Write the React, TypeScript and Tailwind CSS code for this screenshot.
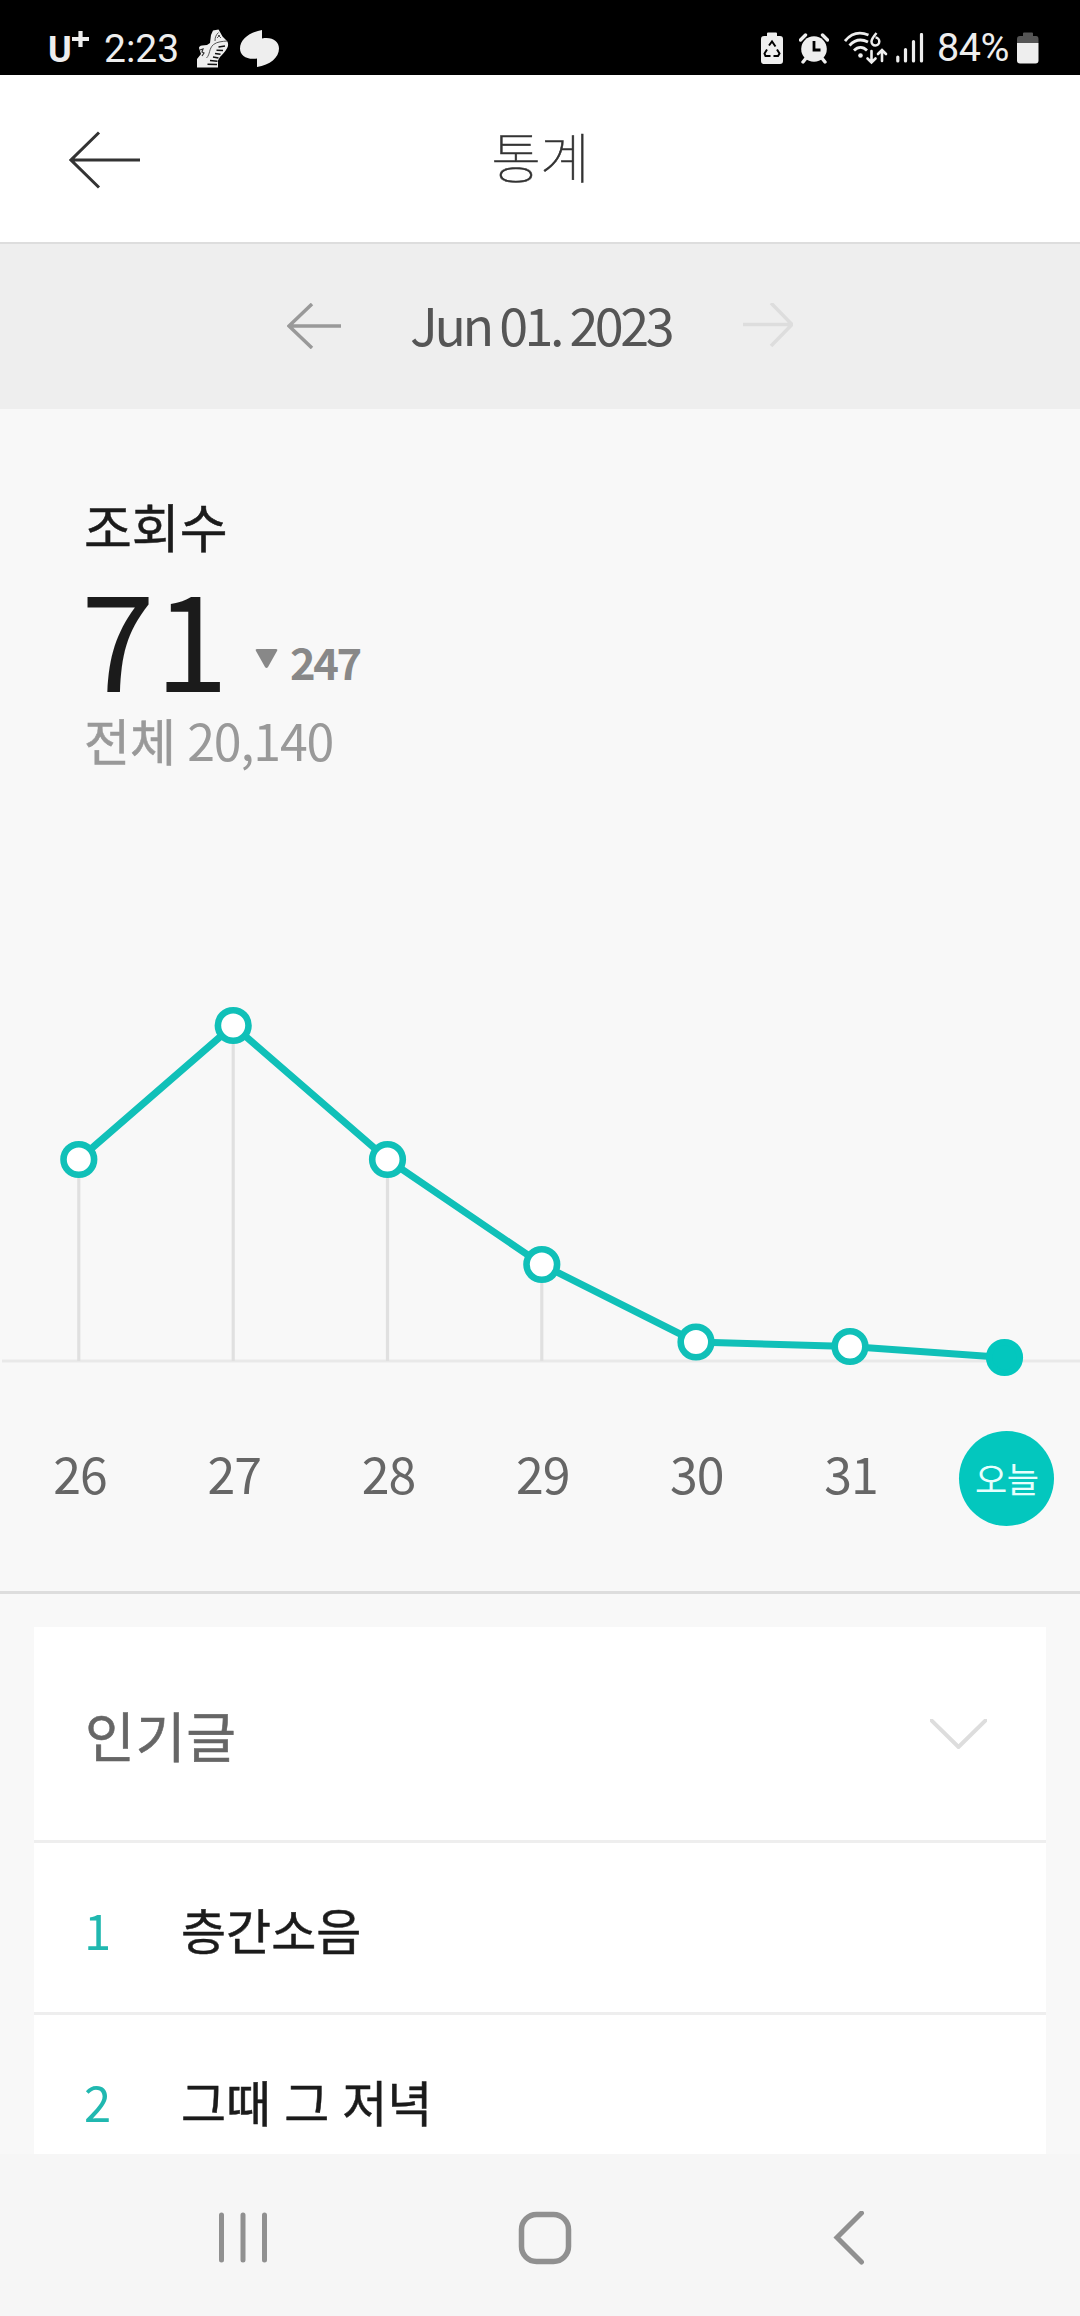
const days = [
  { label: '26', x: 78.8, y: 159.5 },
  { label: '27', x: 233.2, y: 25.5 },
  { label: '28', x: 387.5, y: 159.5 },
  { label: '29', x: 541.8, y: 264.5 },
  { label: '30', x: 696, y: 342 },
  { label: '31', x: 850, y: 346.5 },
  { label: '오늘', x: 1004.5, y: 357.5, today: true },
];

const posts = [
  { rank: 1, title: '층간소음' },
  { rank: 2, title: '그때 그 저녁' },
];

function ShoeIcon() {
  return (
    <svg width="32" height="40" viewBox="0 0 32 40" className="mt-[28.5px] ml-[18px] shrink-0">
      <path
        d="M0 38.500V30l4-5-2-6q0-2 3-2.500l5-.5 3-2 1-8 2-4.500L21.500.500 23 3l2.500 4.500 4 4q2 1.500 1.500 5.500-1 4-8 11l-2 3.500v7z"
        fill="#eeeeee"
      />
      <path d="M9.500 29c4-4 2-9 7-13.500 4-3 9-3 13.500-3.500M18 12c0-4 1-6 3.500-8.500M21 6l3 3M20 9l3-3" stroke="#444" strokeWidth="0.9" fill="none" />
      <path
        d="M21.500 18l6.500-1M19.500 21.200l6.500.3M18 24.500l5.500.8M16 28l5.500 1M13 31.500l7.500.8M10.500 35.200l9.500.3"
        stroke="#111"
        strokeWidth="1.600"
      />
      <path d="M3 21l3-1-1 3 2 1-2 3" stroke="#333" strokeWidth="1.200" fill="none" />
    </svg>
  );
}

function WifiIcon() {
  return (
    <svg width="44" height="34" viewBox="0 0 44 34" fill="none" stroke="#eeeeee" strokeWidth="2.8" className="mt-[31px] ml-[15px] shrink-0">
      <path d="M1 10C8 1.500 17 1 24.500 4" />
      <path d="M5.500 14.500C11 8.500 17 7.500 24 11" />
      <path d="M10 19.500c4-4 9-4 13 0" />
      <circle cx="16.500" cy="24.500" r="2.300" fill="#eeeeee" stroke="none" />
      <path d="M32.500 2c-3 3.500-5 6-5 8.500a3.900 3.900 0 1 0 4-3.900" strokeWidth="2.5" />
      <path d="M27.500 20v11M23.500 27.500l4 4 4-4M38 30V19.500M34 23l4-4 4 4" strokeWidth="2.600" strokeLinecap="round" />
    </svg>
  );
}

function StatusBar() {
  return (
    <div className="flex h-[75px] items-start bg-black pl-[47px] font-[Roboto,sans-serif] text-[#eeeeee]">
      <span className="mt-[31px] ml-px w-[24px] text-[36px] leading-[38px] font-bold">U</span>
      <svg width="17" height="18" viewBox="0 0 17 18" className="mt-[30px] shrink-0">
        <path d="M8.500 1v16M0 9h17" stroke="#eeeeee" strokeWidth="4.2" />
      </svg>
      <span className="mt-[29px] ml-[15px] w-[75px] text-[39px] leading-[40px]">2:23</span>
      <ShoeIcon />
      <svg width="40" height="38" viewBox="0 0 40 38" className="mt-[30px] ml-[11px] shrink-0">
        <path d="M22 0v8.500C32 6.500 39 11 39 18.500c0 9-9 16.500-22 18.500v-8.500C7 30 0 26 0 18.500 0 9 10 2 22 0z" fill="#eeeeee" />
      </svg>

      <svg width="22" height="32" viewBox="0 0 22 32" className="mt-[32px] ml-[481px] shrink-0">
        <path d="M6 4V1.500Q6 .5 7 .5h8q1 0 1 1V4h3q3 0 3 3v22q0 3-3 3H3q-3 0-3-3V7q0-3 3-3z" fill="#eeeeee" />
        <path d="M8 13.500l3-4 3.500 5M16 17.500l2.500 4-1.500 2.500h-4.500M9.500 24H4.500L3.500 21.500l2.500-4" stroke="#000" strokeWidth="2" fill="none" />
      </svg>
      <svg width="30" height="31" viewBox="0 0 30 31" className="mt-[33px] ml-[16px] shrink-0">
        <circle cx="15" cy="16" r="12.800" fill="#eeeeee" />
        <path d="M1.500 7l5-5M28.500 7l-5-5M4 29l4-5M26 29l-4-5" stroke="#eeeeee" strokeWidth="3.4" strokeLinecap="round" />
        <path d="M15 8v9h6.500" stroke="#000" strokeWidth="2.8" fill="none" />
      </svg>
      <WifiIcon />
      <svg width="28" height="30" viewBox="0 0 28 30" className="mt-[33px] ml-[8px] shrink-0">
        <path d="M1.800 24v4M9.500 16.500V28M17.500 8.500V28M25.500 1.500V28" stroke="#eeeeee" strokeWidth="3.200" strokeLinecap="round" />
      </svg>
      <span className="mt-[28px] ml-[13px] w-[80px] text-[39.5px] leading-[40px] tracking-[-0.5px]">84%</span>
      <svg width="22" height="32" viewBox="0 0 22 32" className="mt-[32px] shrink-0">
        <path d="M6 4V1.500Q6 .5 7 .5h8q1 0 1 1V4h3q2.500 0 2.500 3v4H0V7q0-3 3-3z" fill="#555555" />
        <path d="M0 11h21.500v17.500q0 3-3 3H3q-3 0-3-3z" fill="#eeeeee" />
      </svg>
    </div>
  );
}

function TrendChart() {
  return (
    <svg width="1080" height="390" viewBox="0 0 1080 390" className="mt-[231px] block">
      <path d="M2 361H1080" stroke="#e9e9e9" strokeWidth="3" />
      {days.slice(0, 4).map((day) => (
        <path key={day.label} d={`M${day.x} ${day.y}V361`} stroke="#e0e0e0" strokeWidth="3.2" />
      ))}
      <polyline points={days.map((day) => `${day.x},${day.y}`).join(' ')} fill="none" stroke="#10c0b8" strokeWidth="7" />
      {days.map((day) => (
        <circle
          key={day.label}
          cx={day.x}
          cy={day.y}
          r="15.300"
          fill={day.today ? '#03c7be' : '#ffffff'}
          stroke={day.today ? '#03c7be' : '#10c0b8'}
          strokeWidth="6.600"
        />
      ))}
    </svg>
  );
}

export default function App() {
  return (
    <div className="flex h-[2316px] w-[1080px] flex-col overflow-hidden bg-[#f8f8f8] font-['Noto_Sans_CJK_KR',sans-serif]">
      <StatusBar />

      {/* Title bar */}
      <header className="grid h-[169px] shrink-0 grid-cols-3 border-b-2 border-[#dddddd] bg-white">
        <svg width="72" height="58" viewBox="0 0 72 58" className="mt-[56px] ml-[69px]">
          <path d="M71 29H2M30 1.500L2 29l28 27.500" fill="none" stroke="#333333" strokeWidth="3" />
        </svg>
        <h1 className="text-center text-[54px] leading-[161px] font-thin tracking-[-1px] text-[#333333] [-webkit-text-stroke:0.5px_#333333]">
          통계
        </h1>
      </header>

      {/* Date picker */}
      <div className="flex h-[165px] shrink-0 items-start bg-[#eeeeee] pl-[287px]">
        <svg width="54" height="46" viewBox="0 0 54 46" className="mt-[59px] shrink-0">
          <path d="M54 23H2M25 1L2 23l23 22" fill="none" stroke="#999999" strokeWidth="3.500" />
        </svg>
        <span className="mt-[42px] w-[402px] pl-[69px] text-[52px] leading-[76px] tracking-[-3.4px] whitespace-nowrap text-[#555555]">
          Jun 01. 2023
        </span>
        <svg width="50" height="44" viewBox="0 0 50 44" className="mt-[59px] shrink-0">
          <path d="M0 21.500h48M28 0l21 21.500-21 21.500" fill="none" stroke="#dddddd" strokeWidth="3.500" />
        </svg>
      </div>

      {/* Views */}
      <section className="h-[1185px] shrink-0 border-b-[3px] border-[#dddddd]">
        <div className="pt-[87px] pl-[84px]">
          <h2 className="text-[52px] leading-[60px] text-[#1b1b1b] [-webkit-text-stroke:0.5px_#1b1b1b]">조회수</h2>
          <div className="mt-[13px] flex h-[131px] items-start">
            <span className="-ml-[3px] w-[149px] text-[133px] leading-[131px] text-[#1b1b1b]">71</span>
            <svg width="23" height="20" viewBox="0 0 23 20" className="mt-[80px] ml-[25px]">
              <path d="M2 0h19q2 0 1 2L13 18q-1.500 2-3 0L1 2Q0 0 2 0z" fill="#888888" />
            </svg>
            <span className="mt-[71px] ml-[12px] text-[43.500px] leading-[44px] font-bold tracking-[-2.4px] text-[#888888]">247</span>
          </div>
          <p className="mt-[9px] text-[50px] leading-[60px] text-[#999999]">
            <span className="[-webkit-text-stroke:0.5px_#999999]">전체</span> <span className="tracking-[-1.1px]">20,140</span>
          </p>
        </div>
        <TrendChart />
        <div className="mt-[41px] ml-[3px] flex">
          {days.map((day) => (
            <div key={day.label} className="flex w-[154.200px] shrink-0 justify-center">
              {day.today ? (
                <span className="ml-[3px] h-[95px] w-[95px] rounded-full bg-[#03c7be] text-center text-[35px] leading-[93px] tracking-[-0.5px] text-[#e6fffd]">
                  {day.label}
                </span>
              ) : (
                <span className="text-[50px] leading-[83px] tracking-[-1px] text-[#666666]">{day.label}</span>
              )}
            </div>
          ))}
        </div>
      </section>

      {/* Popular posts */}
      <section className="mx-[34px] mt-[33px] h-[527px] shrink-0 overflow-hidden bg-white">
        <div className="flex h-[216px] items-start justify-between border-b-[3px] border-[#eeeeee] pr-[59px] pl-[51px]">
          <h2 className="text-[54px] leading-[216px] tracking-[1px] text-[#666666] [-webkit-text-stroke:0.6px_#666666]">인기글</h2>
          <svg width="57" height="30" viewBox="0 0 57 30" className="mt-[92px]">
            <path d="M0 0l28.500 28L57 0" fill="none" stroke="#dddddd" strokeWidth="4" />
          </svg>
        </div>
        {posts.map((post) => (
          <div key={post.rank} className="flex h-[172px] border-b-[3px] border-[#eeeeee] pl-[50px] text-[49px] leading-[172px]">
            <span className="w-[97px] text-[#20b8b0]">{post.rank}</span>
            <span className="text-[#1b1b1b] [word-spacing:2px] [-webkit-text-stroke:0.5px_#1b1b1b]">{post.title}</span>
          </div>
        ))}
      </section>

      {/* Navigation buttons */}
      <nav className="flex h-[162px] shrink-0 items-start bg-[#f6f6f6] pt-[57px] pl-[218px]">
        <svg width="50" height="54" viewBox="0 0 50 54">
          <path d="M3.500 4v45M25 4v45M46.500 4v45" stroke="#909090" strokeWidth="5" strokeLinecap="round" />
        </svg>
        <svg width="54" height="56" viewBox="0 0 54 56" className="ml-[250px]">
          <rect x="3.500" y="3.500" width="47" height="47" rx="15" fill="none" stroke="#909090" strokeWidth="5.500" />
        </svg>
        <svg width="32" height="56" viewBox="0 0 32 56" className="ml-[261px]">
          <path d="M28.500 2L4 26.500 28.500 51" fill="none" stroke="#909090" strokeWidth="5" strokeLinecap="round" />
        </svg>
      </nav>
    </div>
  );
}
